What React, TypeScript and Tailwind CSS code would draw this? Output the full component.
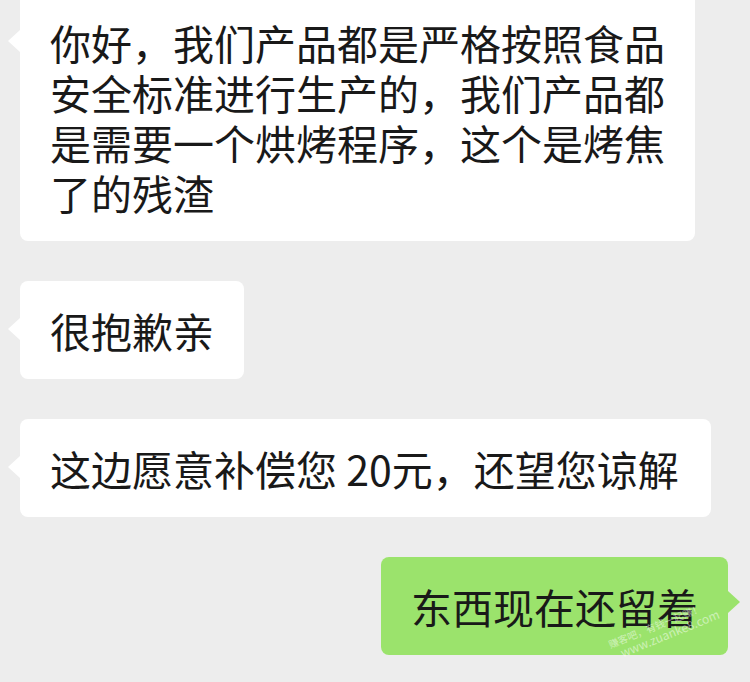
import React from "react";

const font = { fontFamily: '"Noto Sans CJK SC", "Noto Sans", sans-serif' };

function LeftBubble({ text, className = "" }: { text: string; className?: string }) {
    return (
        <div className="relative self-start ml-[20px]">
            {/* tail */}
            <div className="absolute left-[-12px] top-[37px] w-0 h-0 border-y-[11px] border-y-transparent border-r-[12px] border-r-white" />
            <div className={`bg-white rounded-[8px] px-[30px] py-[24px] text-[41px] leading-[50px] text-[#191919] ${className}`}>
                {text}
            </div>
        </div>
    );
}

export default function App() {
    return (
        <div className="w-[750px] h-[682px] bg-[#ededed] overflow-hidden relative" style={font}>
            <div className="flex flex-col gap-[40px] mt-[-7px]">
                <LeftBubble
                    className="max-w-[675px]"
                    text="你好，我们产品都是严格按照食品安全标准进行生产的，我们产品都是需要一个烘烤程序，这个是烤焦了的残渣"
                />
                <LeftBubble text="很抱歉亲" />
                <LeftBubble text="这边愿意补偿您 20元，还望您谅解" className="whitespace-nowrap pr-[32px]" />

                <div className="relative self-end mr-[22px]">
                    <div className="absolute right-[-12px] top-[34px] w-0 h-0 border-y-[11px] border-y-transparent border-l-[12px] border-l-[#9be36c]" />
                    <div className="bg-[#9be36c] rounded-[8px] px-[30px] py-[24px] text-[41px] leading-[50px] text-[#191919]">
                        东西现在还留着
                    </div>
                    {/* watermark */}
                    <div className="absolute left-[226px] top-[60px] -rotate-[22deg] text-white/50 text-[10px] leading-[12px] pointer-events-none">
                        <div>赚客吧，有钱一起赚！</div>
                        <div className="text-[12px] ml-[8px]">www.zuanke8.com</div>
                    </div>
                </div>
            </div>
        </div>
    );
}
